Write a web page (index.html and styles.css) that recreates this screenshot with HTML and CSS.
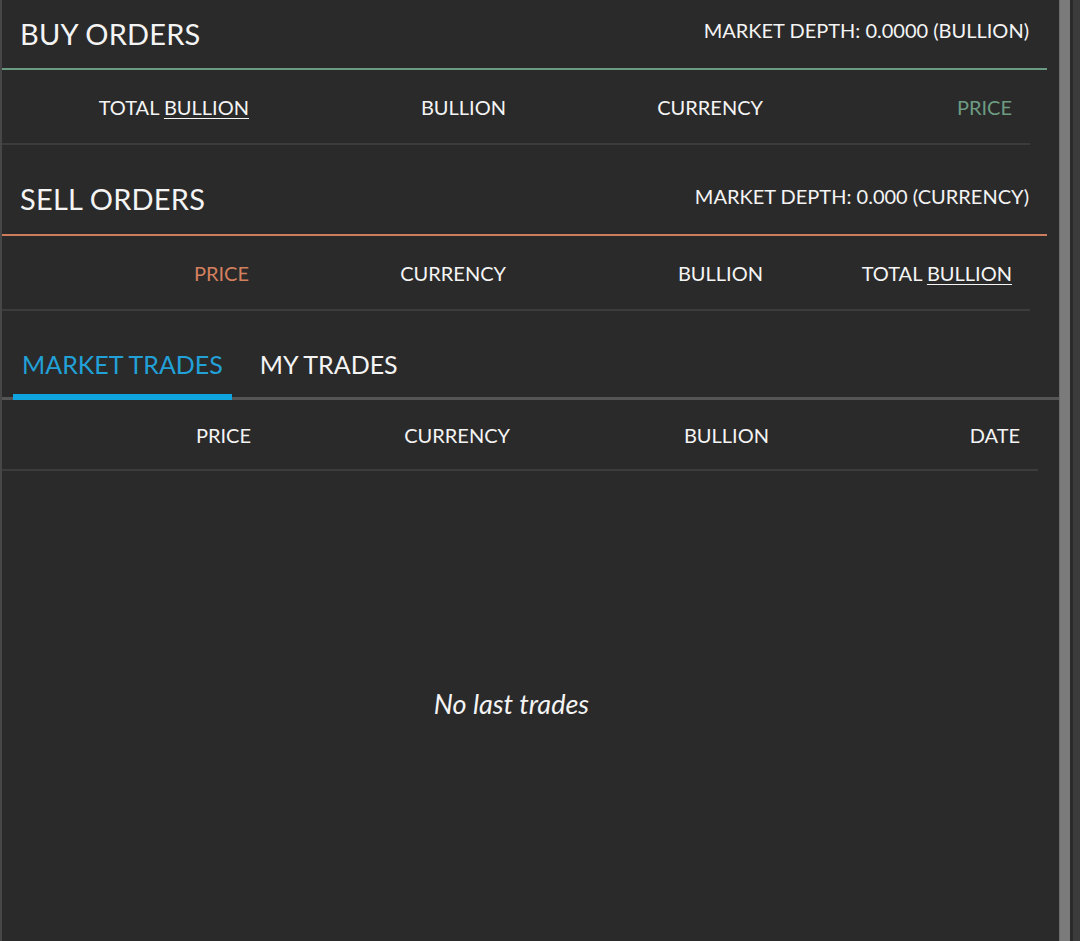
FILE: index.html
```html
<!DOCTYPE html>
<html>
<head>
<meta charset="utf-8">
<link rel="stylesheet" href="styles.css">
</head>
<body>
<div class="frame">
  <div class="edge"></div>
  <main class="panel">
    <section class="book">
      <header class="book-head buy">
        <h2 class="book-title">BUY ORDERS</h2>
        <div class="depth">MARKET DEPTH: 0.0000 (BULLION)</div>
      </header>
      <div class="cols">
        <span>TOTAL <u>BULLION</u></span>
        <span>BULLION</span>
        <span>CURRENCY</span>
        <span class="green">PRICE</span>
      </div>
    </section>
    <section class="book">
      <header class="book-head sell">
        <h2 class="book-title">SELL ORDERS</h2>
        <div class="depth">MARKET DEPTH: 0.000 (CURRENCY)</div>
      </header>
      <div class="cols">
        <span class="orange">PRICE</span>
        <span>CURRENCY</span>
        <span>BULLION</span>
        <span>TOTAL <u>BULLION</u></span>
      </div>
    </section>
    <section class="trades">
      <nav class="tabs">
        <div class="tab active">MARKET TRADES</div>
        <div class="tab">MY TRADES</div>
      </nav>
      <div class="cols wide">
        <span>PRICE</span>
        <span>CURRENCY</span>
        <span>BULLION</span>
        <span>DATE</span>
      </div>
      <div class="empty">No last trades</div>
    </section>
  </main>
  <div class="gutter"></div>
  <div class="scrollbar"></div>
  <div class="gap"></div>
  <div class="outer"></div>
</div>
</body>
</html>
```
FILE: styles.css
```css
* { box-sizing: border-box; }
html, body { margin: 0; padding: 0; }
body {
  background: #2a2a2a;
  color: #f4f4f4;
  font-family: Lato, "Noto Sans", sans-serif;
  width: 1080px;
  height: 941px;
  overflow: hidden;
}
.frame {
  display: flex;
  height: 941px;
}
.edge { width: 2px; background: #474747; flex: none; }
.panel {
  width: 1045px;
  flex: none;
  display: flex;
  flex-direction: column;
}
.gutter { width: 12px; flex: none; }
.scrollbar { width: 11px; background: #7b7b7b; flex: none; border-left: 1px solid #6a6a6a; }
.gap { width: 3px; background: #2a2a2a; flex: none; }
.outer { flex: 1; background: #3b3b3b; }

.book-head {
  display: flex;
  justify-content: space-between;
  align-items: center;
  padding: 0 18px 0 18px;
}
.book-head.buy { height: 70px; border-bottom: 2px solid #6b9a82; padding-bottom: 2px; }
.book-head.sell { height: 91px; border-bottom: 2px solid #cd7c5e; padding-top: 17px; }
.book-title {
  margin: 0;
  font-weight: 400;
  font-size: 29px;
  letter-spacing: 0.2px;
}
.depth {
  font-size: 20px;
  margin-bottom: 7px;
}
.sell .depth { margin-bottom: 5px; }
.cols {
  display: grid;
  grid-template-columns: repeat(4, 1fr);
  width: 1028px;
  height: 75px;
  align-items: center;
  border-bottom: 2px solid #3c3c3c;
  font-size: 20px;
}
.cols span { text-align: right; padding-right: 10px; }
.cols span:last-child { padding-right: 18px; }
.cols u { text-decoration-thickness: 1px; text-underline-offset: 3px; }
.cols.wide { width: 1036px; height: 71px; }
.green { color: #6d9c83; }
.orange { color: #d4805f; }

.trades { flex: 1; display: flex; flex-direction: column; }
.tabs {
  display: flex;
  height: 89px;
  align-items: flex-end;
  padding-left: 11px;
  gap: 19px;
  border-bottom: 3px solid #555;
  width: 1063px;
}
.tab {
  font-size: 25px;
  padding: 0 9px 15px;
  margin-bottom: -3px;
  border-bottom: 6px solid transparent;
}
.tab.active { color: #22a0d8; border-bottom-color: #0ea5e0; }
.empty {
  flex: 1;
  display: flex;
  align-items: center;
  justify-content: center;
  font-style: italic;
  font-size: 27px;
  padding: 0 26px 6px 0;
}
```
